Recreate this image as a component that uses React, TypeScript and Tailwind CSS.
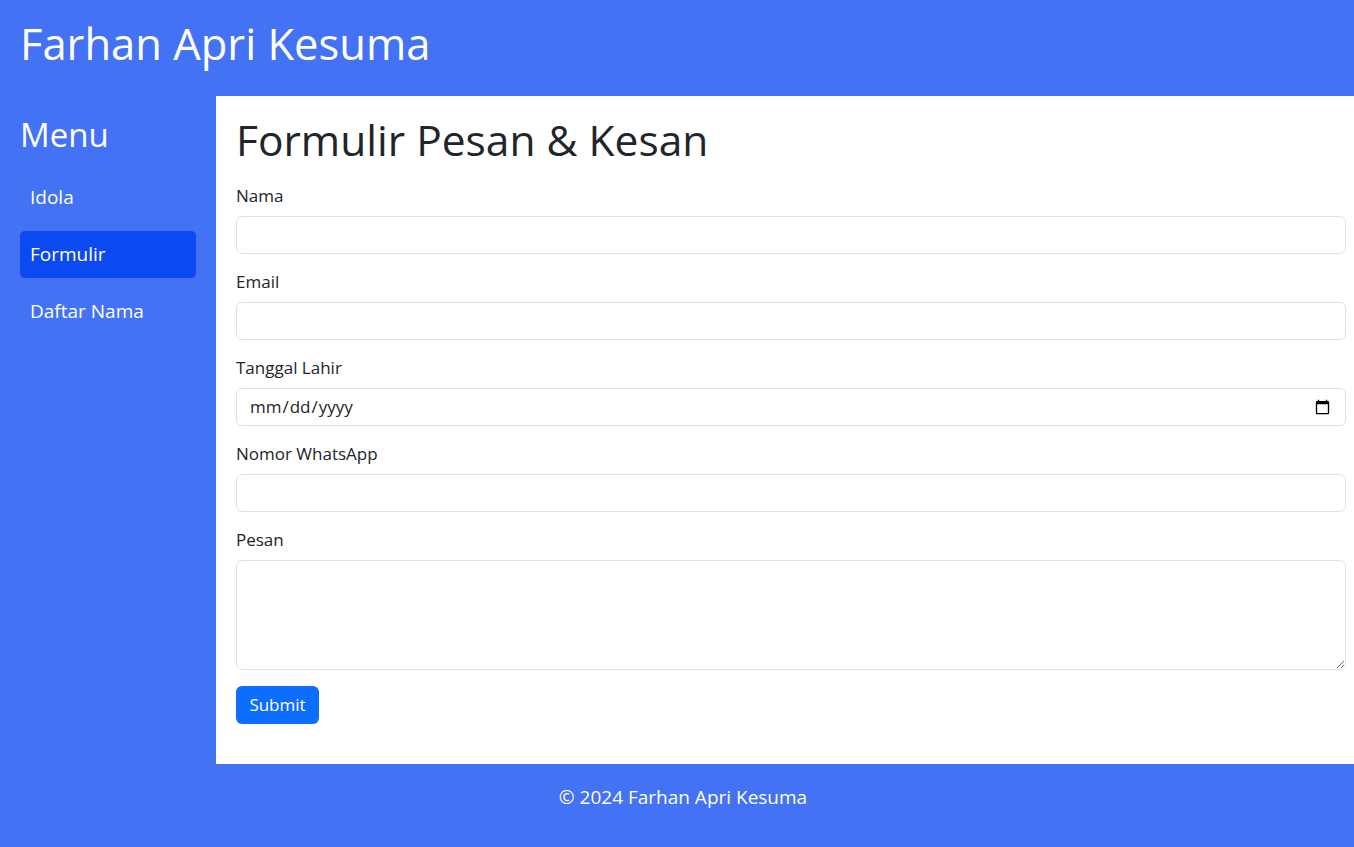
import { FC } from "react";

const menu = ["Idola", "Formulir", "Daftar Nama"];

const fieldClass =
  "block w-full rounded-[6px] border border-[#dee2e6] bg-white px-3 py-[6px] text-[17px] leading-6 text-[#212529] outline-none";

const labelClass = "mb-2 block text-[17px] leading-6";

const App: FC = () => {
  return (
    <div className="flex min-h-[847px] flex-col bg-[#4373f4] font-['Open_Sans',sans-serif] text-[#212529]">
      <header className="h-24 px-5 pt-4">
        <h1 className="text-[43.5px] leading-[56px] text-white">Farhan Apri Kesuma</h1>
      </header>

      <div className="flex">
        <aside className="w-[216px] shrink-0 p-5">
          <h2 className="text-[33px] leading-[38px] font-medium text-white">Menu</h2>
          <nav className="mt-5 flex flex-col gap-[10px]">
            {menu.map((item) => (
              <a
                key={item}
                href="#"
                className={
                  "flex h-[47px] items-center rounded-[5px] px-[10px] text-[19px] text-white " +
                  (item === "Formulir" ? "bg-[#0d49f1]" : "")
                }
              >
                {item}
              </a>
            ))}
          </nav>
        </aside>

        <main className="flex-1 bg-white pt-5 pr-2 pb-10 pl-5">
          <h1 className="mb-5 text-[42.5px] leading-[48px]">Formulir Pesan &amp; Kesan</h1>
          <form className="flex flex-col">
            <label htmlFor="nama" className={labelClass}>Nama</label>
            <input id="nama" type="text" className={fieldClass + " mb-4"} />

            <label htmlFor="email" className={labelClass}>Email</label>
            <input id="email" type="email" className={fieldClass + " mb-4"} />

            <label htmlFor="tgl" className={labelClass}>Tanggal Lahir</label>
            <input id="tgl" type="date" className={fieldClass + " mb-4"} />

            <label htmlFor="wa" className={labelClass}>Nomor WhatsApp</label>
            <input id="wa" type="tel" className={fieldClass + " mb-4"} />

            <label htmlFor="pesan" className={labelClass}>Pesan</label>
            <textarea id="pesan" className={fieldClass + " mb-4 h-[110px]"} />

            <div>
              <button
                type="button"
                className="h-[38px] w-[83px] rounded-[6px] bg-[#0d6efd] text-[17px] text-white"
              >
                Submit
              </button>
            </div>
          </form>
        </main>
      </div>

      <footer className="h-[83px] pt-[21px] pl-3 text-center">
        <p className="text-[19px] leading-6 text-white">© 2024 Farhan Apri Kesuma</p>
      </footer>
    </div>
  );
};

export default App;
